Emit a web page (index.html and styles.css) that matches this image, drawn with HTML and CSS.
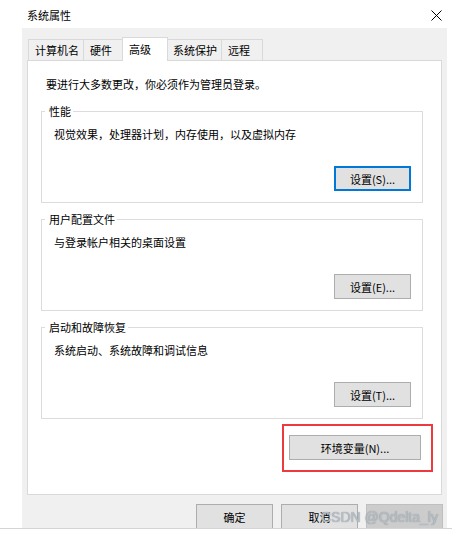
FILE: index.html
```html
<!DOCTYPE html>
<html lang="zh-CN">
<head>
    <meta charset="UTF-8">
    <meta name="viewport" content="width=device-width, initial-scale=1.0">
    <title>系统属性</title>
    <link rel="stylesheet" href="styles.css">
</head>
<body>
    <div class="titlebar">
        <span class="title">系统属性</span>
        <svg class="close" width="11" height="11" viewBox="0 0 11 11">
            <path d="M0.5 0.5 L10.5 10.5 M10.5 0.5 L0.5 10.5" stroke="#000" stroke-width="1" fill="none"/>
        </svg>
    </div>

    <div class="window">
        <div class="tabs">
            <div class="tab">计算机名</div>
            <div class="tab">硬件</div>
            <div class="tab active">高级</div>
            <div class="tab">系统保护</div>
            <div class="tab">远程</div>
        </div>

        <div class="panel">
            <p class="notice">要进行大多数更改，你必须作为管理员登录。</p>

            <fieldset class="group">
                <legend>性能</legend>
                <p class="desc">视觉效果，处理器计划，内存使用，以及虚拟内存</p>
                <div class="group-actions">
                    <button class="btn focused">设置(S)...</button>
                </div>
            </fieldset>

            <fieldset class="group">
                <legend>用户配置文件</legend>
                <p class="desc">与登录帐户相关的桌面设置</p>
                <div class="group-actions">
                    <button class="btn">设置(E)...</button>
                </div>
            </fieldset>

            <fieldset class="group">
                <legend>启动和故障恢复</legend>
                <p class="desc">系统启动、系统故障和调试信息</p>
                <div class="group-actions">
                    <button class="btn">设置(T)...</button>
                </div>
            </fieldset>

            <div class="env-row">
                <div class="highlight">
                    <button class="btn wide">环境变量(N)...</button>
                </div>
            </div>
        </div>

        <div class="footer">
            <button class="btn">确定</button>
            <button class="btn">取消</button>
            <button class="btn" disabled></button>
            <span class="watermark">CSDN @Qdelta_ly</span>
        </div>
    </div>
    <div class="bottom-line"></div>
</body>
</html>
```

FILE: styles.css
```css
body {
    margin: 0;
    background: #fff;
    color: #000;
    font-family: "Noto Sans CJK SC", "Noto Sans", sans-serif;
    font-size: 11px;
    line-height: 16px;
}
.titlebar {
    height: 28px;
    display: flex;
    align-items: center;
    justify-content: space-between;
    padding: 0 10px 0 27px;
}
.title {
    margin-top: 1px;
}
.close {
    display: block;
    margin-top: 2px;
}
.window {
    margin-left: 22px;
    width: 425px;
    height: 500px;
    background: #f0f0f0;
    padding-top: 9px;
    box-sizing: border-box;
    overflow: hidden;
}
.tabs {
    display: flex;
    align-items: flex-end;
    height: 23px;
    margin-left: 6px;
}
.tab {
    height: 21px;
    min-width: 42px;
    box-sizing: border-box;
    padding: 2px 4px 0 6px;
    border: 1px solid #d9d9d9;
    border-bottom: none;
    margin-right: -1px;
    background: #f0f0f0;
}
.tab.active {
    position: relative;
    z-index: 1;
    height: 24px;
    min-width: 46px;
    margin: 0 -2px -1px -2px;
    padding-top: 3px;
    background: #fff;
}
.panel {
    margin-left: 5px;
    width: 415px;
    height: 435px;
    box-sizing: border-box;
    background: #fff;
    border: 1px solid #d9d9d9;
    padding: 15px 18px 0 18px;
}
.notice {
    margin: 0;
}
.group {
    margin: 11px 0 0 -5px;
    padding: 0 11px 11px 11px;
    border: 1px solid #dcdcdc;
    min-inline-size: 0;
}
.group + .group {
    margin-top: 8px;
}
.group legend {
    margin-left: -8px;
    padding: 0 2px 0 4px;
    line-height: 16px;
}
.desc {
    margin: 7px 0 0 1px;
}
.group-actions {
    display: flex;
    justify-content: flex-end;
    margin-top: 24px;
}
.btn {
    width: 77px;
    height: 25px;
    box-sizing: border-box;
    background: #e1e1e1;
    border: 1px solid #adadad;
    font-family: inherit;
    font-size: 11px;
    color: #000;
    padding: 0;
}
.btn.focused {
    border-color: #0078d7;
    box-shadow: inset 0 0 0 1px #0078d7;
}
.btn.wide {
    width: 132px;
}
.btn:disabled {
    background: #cccccc;
    border-color: #bfbfbf;
}
.env-row {
    display: flex;
    justify-content: flex-end;
    margin: 5px -10px 0 0;
}
.highlight {
    border: 2px solid #ec3a3e;
    padding: 9px 10px 10px 5px;
}
.highlight .btn {
    display: block;
}
.footer {
    position: relative;
    display: flex;
    justify-content: flex-end;
    gap: 8px;
    margin-top: 9px;
    padding-right: 4px;
}
.watermark {
    position: absolute;
    left: 299px;
    top: 5px;
    font-family: "Liberation Sans", Arial, sans-serif;
    font-size: 14px;
    line-height: 16px;
    color: rgba(190, 196, 204, 0.9);
    text-shadow: 0 0 1px #7d838b;
    white-space: nowrap;
}
.bottom-line {
    height: 1px;
    background: #d4d4d4;
}
```
